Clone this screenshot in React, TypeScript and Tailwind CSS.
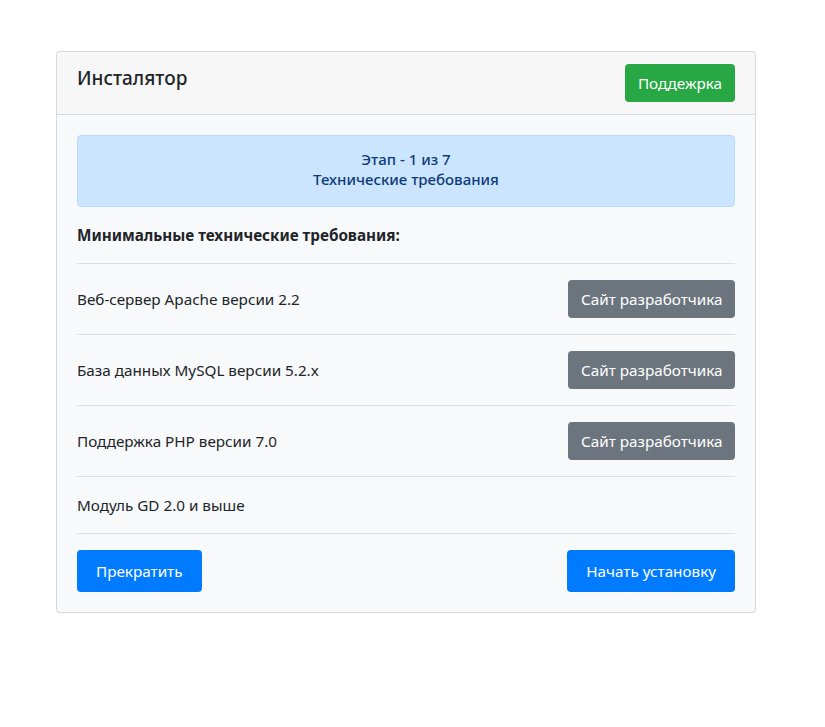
import React from "react";

const rows = [
  { text: "Веб-сервер Apache версии 2.2", btn: true },
  { text: "База данных MySQL версии 5.2.x", btn: true },
  { text: "Поддержка PHP версии 7.0", btn: true },
  { text: "Модуль GD 2.0 и выше", btn: false },
];

export default function App() {
  return (
    <div
      className="min-h-[727px] bg-white pt-[51px] text-[#212529]"
      style={{ fontFamily: '"Noto Sans", "Open Sans", sans-serif' }}
    >
      <div className="ml-[56px] w-[700px] overflow-hidden rounded border border-[rgba(0,0,0,0.125)] bg-[#f8f9fa]">
        <div className="flex items-center justify-between border-b border-[rgba(0,0,0,0.125)] bg-[#f7f7f7] px-5 py-3">
          <div className="-mt-[10px] text-[19px] font-medium leading-[24px]">Инсталятор</div>
          <button className="h-[38px] rounded bg-[#28a745] px-[13px] text-[15.25px] leading-6 text-white">
            Поддежрка
          </button>
        </div>
        <div className="p-5">
          <div className="rounded border border-[#b8daff] bg-[#cce5ff] px-5 pb-[17px] pt-[13px] text-center text-[15px] font-medium leading-[20px] text-[#0d3a78]">
            <div>Этап - 1 из 7</div>
            <div>Технические требования</div>
          </div>
          <div className="mt-4 pb-4 text-[15.25px] font-bold leading-6">
            Минимальные технические требования:
          </div>
          {rows.map((r) => (
            <div
              key={r.text}
              className="flex items-center justify-between border-t border-[rgba(0,0,0,0.1)] py-4 text-[15.25px] leading-6"
            >
              <span>{r.text}</span>
              {r.btn && (
                <button className="h-[38px] rounded bg-[#6c757d] px-[12.5px] text-[15.25px] text-white">
                  Сайт разработчика
                </button>
              )}
            </div>
          ))}
          <div className="flex justify-between border-t border-[rgba(0,0,0,0.1)] pt-4">
            <button className="h-[42px] rounded bg-[#007bff] px-[19px] text-[15.25px] text-white">
              Прекратить
            </button>
            <button className="h-[42px] rounded bg-[#007bff] px-[19px] text-[15.25px] text-white">
              Начать установку
            </button>
          </div>
        </div>
      </div>
    </div>
  );
}
